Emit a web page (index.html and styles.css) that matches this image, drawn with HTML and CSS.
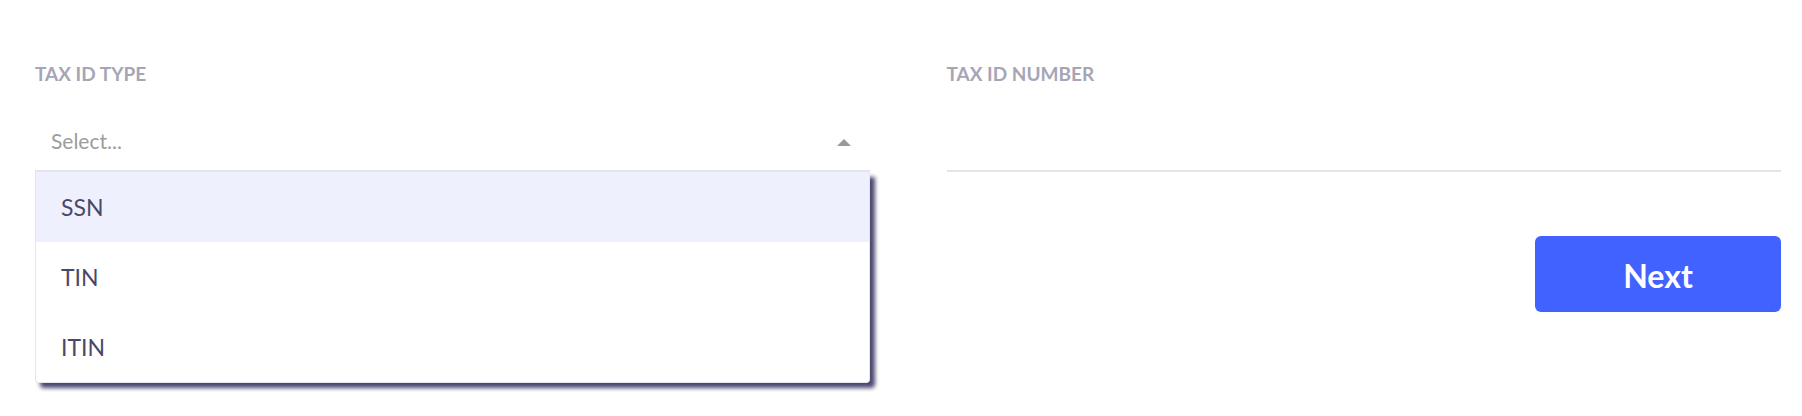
FILE: index.html
```html
<!DOCTYPE html>
<html lang="en">
<head>
<meta charset="utf-8">
<title>Tax ID</title>
<link rel="stylesheet" href="styles.css">
</head>
<body>
<form class="form">
  <div class="field">
    <div class="label">TAX ID TYPE</div>
    <div class="select">
      <div class="trigger">
        <span class="placeholder">Select...</span>
        <svg class="arrow" width="14" height="7" viewBox="0 0 14 7"><path d="M0 7 L7 0 L14 7 Z" fill="#999999"/></svg>
      </div>
      <ul class="menu">
        <li class="option active">SSN</li>
        <li class="option">TIN</li>
        <li class="option">ITIN</li>
      </ul>
    </div>
  </div>
  <div class="field right">
    <div class="label">TAX ID NUMBER</div>
    <div class="input"></div>
    <button type="button" class="next">Next</button>
  </div>
</form>
</body>
</html>
```
FILE: styles.css
```css
* { box-sizing: border-box; }
html, body {
  min-height: 100vh;
}
body {
  margin: 0;
  background: #ffffff;
  font-family: Lato, "Open Sans", sans-serif;
}
.form {
  display: grid;
  grid-template-columns: 1fr 1fr;
  column-gap: 77px;
  min-height: 416px;
  align-items: start;
  padding: 64px 21px 0 35px;
}
.field {
  display: flex;
  flex-direction: column;
}
.label {
  font-size: 19px;
  line-height: 20px;
  font-weight: 700;
  color: #a6a5b6;
}
.select {
  position: relative;
}
.trigger {
  height: 88px;
  display: flex;
  align-items: flex-end;
  justify-content: space-between;
  padding: 0 19px 14px 16px;
  border-bottom: 2px solid #e4e4ec;
}
.placeholder {
  font-size: 21px;
  line-height: 30px;
  color: #9d9d9d;
}
.arrow {
  display: block;
  margin-bottom: 10px;
}
.menu {
  position: absolute;
  top: 100%;
  left: 0;
  right: 0;
  margin: 0;
  padding: 0;
  list-style: none;
  background: #ffffff;
  border: 1px solid #e6e6ef;
  border-top: none;
  border-radius: 0 0 4px 4px;
  box-shadow: 5px 5px 4px #4a4870;
}
.option {
  height: 70px;
  display: flex;
  align-items: center;
  padding-left: 25px;
  font-size: 23px;
  color: #4a4868;
}
.option.active {
  background: #eef0fd;
}
.input {
  height: 88px;
  border-bottom: 2px solid #e4e4ec;
}
.next {
  align-self: flex-end;
  margin-top: 64px;
  width: 246px;
  height: 76px;
  border: none;
  border-radius: 6px;
  background: #4262ff;
  color: #ffffff;
  font-family: Lato, sans-serif;
  font-size: 32px;
  font-weight: 700;
  padding: 3px 0 0;
}
```
